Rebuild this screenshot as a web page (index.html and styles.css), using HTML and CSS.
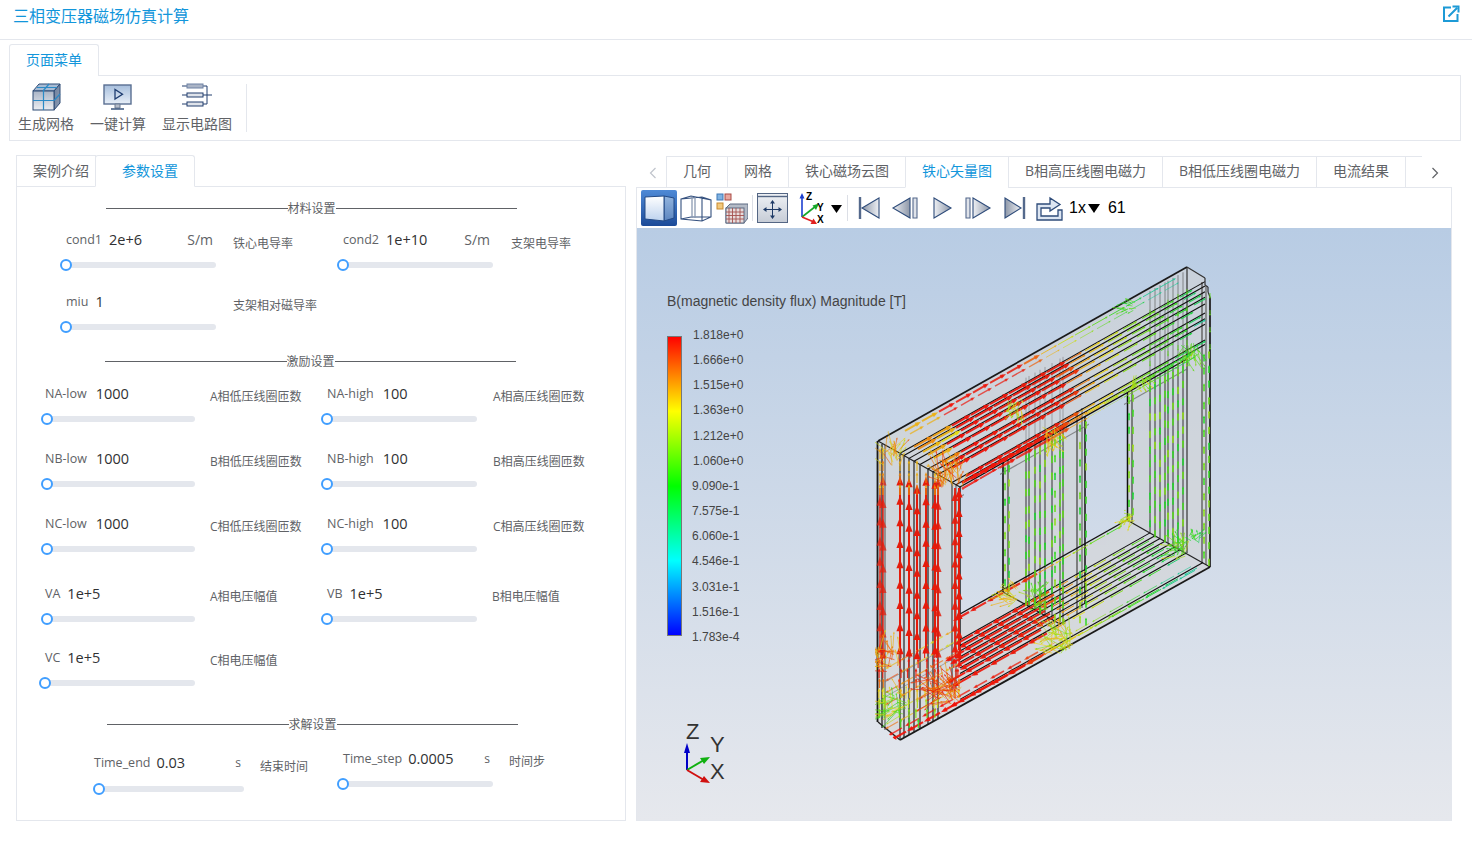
FILE: index.html
```html
<!DOCTYPE html>
<html lang="zh-CN">
<head>
    <meta charset="UTF-8">
    <meta name="viewport" content="width=device-width, initial-scale=1.0">
    <title>三相变压器磁场仿真计算</title>
    <link rel="stylesheet" href="styles.css">
</head>
<body>

<header class="header">
    <span class="title">三相变压器磁场仿真计算</span>
    <svg class="open-link" width="18" height="18" viewBox="0 0 18 18">
        <path d="M9 2.5H2V16H15.5V9" fill="none" stroke="#1d9ad6" stroke-width="2"/>
        <path d="M6.5 11.5L15 3M10.5 1.5H16.5V7.5" fill="none" stroke="#1d9ad6" stroke-width="2"/>
    </svg>
</header>

<section class="menu">
    <div class="menu-tab">页面菜单</div>
    <div class="ribbon">
        <div class="ribbon-btn">
            <svg width="30" height="30" viewBox="0 0 30 30">
                <defs>
                    <linearGradient id="gFace" x1="0" y1="0" x2="0" y2="1"><stop offset="0" stop-color="#a9b4c6"/><stop offset="1" stop-color="#eceef2"/></linearGradient>
                    <linearGradient id="gSide" x1="0" y1="0" x2="1" y2="1"><stop offset="0" stop-color="#6d7f9c"/><stop offset="1" stop-color="#8d9cb4"/></linearGradient>
                    <linearGradient id="gScreen" x1="0" y1="0" x2="0" y2="1"><stop offset="0" stop-color="#a6bedc"/><stop offset="1" stop-color="#e8eff8"/></linearGradient>
                    <linearGradient id="gBtnL" x1="0" y1="0" x2="1" y2="0"><stop offset="0" stop-color="#8d97a8"/><stop offset="1" stop-color="#eef0f4"/></linearGradient>
                    <linearGradient id="gBtnR" x1="0" y1="0" x2="1" y2="0"><stop offset="0" stop-color="#eef0f4"/><stop offset="1" stop-color="#8d97a8"/></linearGradient>
                    <linearGradient id="gActive" x1="0" y1="0" x2="0" y2="1"><stop offset="0" stop-color="#4f8ad6"/><stop offset="1" stop-color="#1b4a98"/></linearGradient>
                    <linearGradient id="gCubeF" x1="0" y1="0" x2="0" y2="1"><stop offset="0" stop-color="#ffffff"/><stop offset="1" stop-color="#bcd2ee"/></linearGradient>
                    <linearGradient id="gCubeS" x1="0" y1="0" x2="0" y2="1"><stop offset="0" stop-color="#92b4de"/><stop offset="1" stop-color="#5c86c0"/></linearGradient>
                    <linearGradient id="gFit" x1="0" y1="0" x2="0" y2="1"><stop offset="0" stop-color="#eef1f5"/><stop offset="1" stop-color="#c6ccd6"/></linearGradient>
                </defs>
                <path d="M2 10L8 3H29L23 10Z" fill="#a8bcd4" stroke="#2c4a75"/>
                <path d="M23 10L29 3V22L23 29Z" fill="url(#gSide)" stroke="#2c4a75"/>
                <rect x="2" y="10" width="21" height="19" fill="url(#gFace)" stroke="#2c4a75"/>
                <path d="M2 19.5H23M12.5 10V29M12 10L18 3M6 6.5H26M23 19.5L29 13" fill="none" stroke="#2b8ac6" stroke-width="1.2"/>
            </svg>
            <span>生成网格</span>
        </div>
        <div class="ribbon-btn">
            <svg width="30" height="30" viewBox="0 0 30 30">
                <rect x="1" y="4" width="27" height="19" fill="url(#gScreen)" stroke="#5a6f92" stroke-width="1.4"/>
                <path d="M12 8.5V18L19.5 13.2Z" fill="none" stroke="#1f3d70" stroke-width="1.3"/>
                <path d="M12 23H17V27H12Z" fill="#b5bcc8" stroke="#6a7a92"/>
                <path d="M8 28H21" stroke="#2c4a75" stroke-width="1.4"/>
            </svg>
            <span>一键计算</span>
        </div>
        <div class="ribbon-btn">
            <svg width="30" height="30" viewBox="0 0 30 30">
                <path d="M0 5H5M21 5H25V23H21M0 14H5M21 14H30M0 23H5" fill="none" stroke="#233f6e" stroke-width="1"/>
                <rect x="5" y="3" width="16" height="4" fill="#aab4c6" stroke="#6e82a4"/>
                <rect x="5" y="12" width="16" height="4" fill="#dfe3ea" stroke="#233f6e"/>
                <rect x="5" y="21" width="16" height="4" fill="#dfe3ea" stroke="#233f6e"/>
            </svg>
            <span>显示电路图</span>
        </div>
        <div class="ribbon-sep"></div>
    </div>
</section>

<main class="main">
    <section class="left">
        <div class="tabs">
            <div class="tab">案例介绍</div>
            <div class="tab active">参数设置</div>
        </div>
        <div class="form">
            <div class="divider d1"><i></i><span>材料设置</span><i></i></div>

            <div class="row r1 h62">
                <div class="field w167">
                    <div class="head"><label>cond1</label><b>2e+6</b><em>S/m</em></div>
                    <div class="slider"><s></s></div>
                </div>
                <div class="desc w110">铁心电导率</div>
                <div class="field w168">
                    <div class="head"><label>cond2</label><b>1e+10</b><em>S/m</em></div>
                    <div class="slider"><s></s></div>
                </div>
                <div class="desc">支架电导率</div>
            </div>
            <div class="row r1 h62">
                <div class="field w167">
                    <div class="head"><label>miu</label><b>1</b></div>
                    <div class="slider"><s></s></div>
                </div>
                <div class="desc">支架相对磁导率</div>
            </div>

            <div class="divider d2"><i></i><span>激励设置</span><i></i></div>

            <div class="row r2 h65">
                <div class="field w165">
                    <div class="head"><label>NA-low</label><b>1000</b></div>
                    <div class="slider short"><s></s></div>
                </div>
                <div class="desc w117">A相低压线圈匝数</div>
                <div class="field w166">
                    <div class="head"><label>NA-high</label><b>100</b></div>
                    <div class="slider"><s></s></div>
                </div>
                <div class="desc">A相高压线圈匝数</div>
            </div>
            <div class="row r2 h65">
                <div class="field w165">
                    <div class="head"><label>NB-low</label><b>1000</b></div>
                    <div class="slider short"><s></s></div>
                </div>
                <div class="desc w117">B相低压线圈匝数</div>
                <div class="field w166">
                    <div class="head"><label>NB-high</label><b>100</b></div>
                    <div class="slider"><s></s></div>
                </div>
                <div class="desc">B相高压线圈匝数</div>
            </div>
            <div class="row r2 h70">
                <div class="field w165">
                    <div class="head"><label>NC-low</label><b>1000</b></div>
                    <div class="slider short"><s></s></div>
                </div>
                <div class="desc w117">C相低压线圈匝数</div>
                <div class="field w166">
                    <div class="head"><label>NC-high</label><b>100</b></div>
                    <div class="slider"><s></s></div>
                </div>
                <div class="desc">C相高压线圈匝数</div>
            </div>
            <div class="row r2 h64">
                <div class="field w165">
                    <div class="head"><label>VA</label><b>1e+5</b></div>
                    <div class="slider short"><s></s></div>
                </div>
                <div class="desc w117">A相电压幅值</div>
                <div class="field w165">
                    <div class="head"><label>VB</label><b>1e+5</b></div>
                    <div class="slider"><s></s></div>
                </div>
                <div class="desc">B相电压幅值</div>
            </div>
            <div class="row r2 h69">
                <div class="field w165">
                    <div class="head"><label>VC</label><b>1e+5</b></div>
                    <div class="slider vc"><s></s></div>
                </div>
                <div class="desc">C相电压幅值</div>
            </div>

            <div class="divider d3"><i></i><span>求解设置</span><i></i></div>

            <div class="row r3">
                <div class="field w166 low">
                    <div class="head"><label>Time_end</label><b>0.03</b><em class="small">s</em></div>
                    <div class="slider end"><s></s></div>
                </div>
                <div class="desc low w83">结束时间</div>
                <div class="field w166">
                    <div class="head"><label>Time_step</label><b>0.0005</b><em class="small">s</em></div>
                    <div class="slider"><s></s></div>
                </div>
                <div class="desc">时间步</div>
            </div>
        </div>
    </section>

    <section class="right">
        <div class="view-tabs">
            <div class="nav"><svg width="8" height="12" viewBox="0 0 8 12"><path d="M6.5 1L1.5 6L6.5 11" fill="none" stroke="#c0c4cc" stroke-width="1.2"/></svg></div>
            <div class="view-list">
                <div class="view-tab">几何</div>
                <div class="view-tab">网格</div>
                <div class="view-tab">铁心磁场云图</div>
                <div class="view-tab active">铁心矢量图</div>
                <div class="view-tab">B相高压线圈电磁力</div>
                <div class="view-tab">B相低压线圈电磁力</div>
                <div class="view-tab">电流结果</div>
            </div>
            <div class="nav next"><svg width="8" height="12" viewBox="0 0 8 12"><path d="M1.5 1L6.5 6L1.5 11" fill="none" stroke="#606266" stroke-width="1.2"/></svg></div>
        </div>
        <div class="viewer">
            <div class="toolbar">
                <svg class="tb-active" width="36" height="36" viewBox="0 0 36 36">
                    <rect width="36" height="36" rx="2" fill="url(#gActive)"/>
                    <path d="M23 6L33 8V28L23 31Z" fill="url(#gCubeS)" stroke="#234a86"/>
                    <path d="M4 7L23 6V31L4 29Z" fill="url(#gCubeF)" stroke="#234a86"/>
                </svg>
                <svg class="ml3" width="32" height="36" viewBox="0 0 32 36">
                    <path d="M1 9L22 7L31 10V27L22 31L1 29ZM22 7V31M1 9L11 6L31 10M1 29L11 27H31" fill="none" stroke="#34507e" stroke-width="1.1"/>
                    <path d="M12 7V28M15 7V28" stroke="#8b9ab2" stroke-width="1.3"/>
                </svg>
                <svg class="ml4" width="32" height="36" viewBox="0 0 32 36">
                    <rect x="1" y="4" width="6" height="6" fill="#7fb2e2" stroke="#3f78b6"/>
                    <rect x="9" y="4" width="6" height="6" fill="#e8a8a0" stroke="#a84a44"/>
                    <rect x="1" y="13" width="6" height="6" fill="#f2c87c" stroke="#c88a30"/>
                    <path d="M10 18L14 14H32V28L28 33H10Z" fill="#b4bbc7" stroke="#5c6a82"/>
                    <rect x="10" y="18" width="18" height="15" fill="#e7dcdc" stroke="#5c6a82"/>
                    <path d="M13 18V33M16.5 18V33M20 18V33M24 18V33M10 22H28M10 25.5H28M10 29H28" stroke="#a4504e" stroke-width=".9"/>
                </svg>
                <div class="tb-sep"></div>
                <svg class="ml4" width="31" height="30" viewBox="0 0 31 30">
                    <rect x=".5" y=".5" width="30" height="29" fill="url(#gFit)" stroke="#546684"/>
                    <path d="M1 3.5H30" stroke="#546684" stroke-width="1.4"/>
                    <path d="M15.5 9V24M8 16.5H23" stroke="#1e3a66" stroke-width="1"/>
                    <path d="M15.5 7L13 10.5H18ZM15.5 26L13 22.5H18ZM6 16.5L9.5 14V19ZM25 16.5L21.5 14V19Z" fill="#1e3a66"/>
                </svg>
                <svg class="ml11" width="44" height="36" viewBox="0 0 44 36">
                    <path d="M3 27V7" stroke="#1c3fd0" stroke-width="1.6"/>
                    <path d="M3 3L.5 8.5H5.5Z" fill="#1c3fd0"/>
                    <path d="M3 27L17 16" stroke="#16a828" stroke-width="1.6"/>
                    <path d="M20 13.5L13.5 15.5L17 20Z" fill="#16a828"/>
                    <path d="M3 27L15 32" stroke="#e02020" stroke-width="1.6"/>
                    <path d="M18 34L11.5 34L14.5 28.5Z" fill="#e02020"/>
                    <text x="7" y="10" class="axis-mini">Z</text>
                    <text x="18" y="21" class="axis-mini">Y</text>
                    <text x="18" y="33" class="axis-mini">X</text>
                    <path d="M32 15H43L37.5 23Z" fill="#000"/>
                </svg>
                <div class="tb-sep sep2"></div>
                <svg class="ml10" width="22" height="24" viewBox="0 0 22 24">
                    <path d="M2 1V23" stroke="#54698c" stroke-width="2.4"/>
                    <path d="M21 2V22L4 12Z" fill="url(#gBtnL)" stroke="#2f4c7a" stroke-width="1.1"/>
                </svg>
                <svg class="ml11" width="28" height="24" viewBox="0 0 28 24">
                    <path d="M19 2V22L2 12Z" fill="url(#gBtnR)" stroke="#2f4c7a" stroke-width="1.1"/>
                    <path d="M22 2H26V22H22Z" fill="#dfe3ea" stroke="#54698c" stroke-width="1.1"/>
                </svg>
                <svg class="ml13" width="21" height="24" viewBox="0 0 21 24">
                    <path d="M2 2V22L19 12Z" fill="url(#gBtnR)" stroke="#2f4c7a" stroke-width="1.1"/>
                </svg>
                <svg class="ml12" width="27" height="24" viewBox="0 0 27 24">
                    <path d="M1 2H5V22H1Z" fill="#dfe3ea" stroke="#54698c" stroke-width="1.1"/>
                    <path d="M8 2V22L25 12Z" fill="url(#gBtnR)" stroke="#2f4c7a" stroke-width="1.1"/>
                </svg>
                <svg class="ml11" width="24" height="24" viewBox="0 0 24 24">
                    <path d="M2 2V22L18 12Z" fill="url(#gBtnL)" stroke="#2f4c7a" stroke-width="1.1"/>
                    <path d="M21 1V23" stroke="#54698c" stroke-width="2.4"/>
                </svg>
                <svg class="ml8" width="28" height="26" viewBox="0 0 28 26">
                    <path d="M2 9H15V3L25 9.5L15 16V13H6V21H23V15H27V25H2Z" fill="#dde6f2" stroke="#2f4c7a" stroke-width="1.3"/>
                </svg>
                <span class="speed">1x</span>
                <svg class="ml2" width="12" height="9" viewBox="0 0 12 9"><path d="M0 0H12L6 9Z" fill="#000"/></svg>
                <span class="frame">61</span>
            </div>
            <div class="canvas">
                <svg class="scene" width="814" height="592" viewBox="637 228 814 592">
                    <defs>
                        <linearGradient id="gLegend" x1="0" y1="0" x2="0" y2="1">
                            <stop offset="0" stop-color="#ff0000"/>
                            <stop offset=".25" stop-color="#ffff00"/>
                            <stop offset=".5" stop-color="#00ff00"/>
                            <stop offset=".75" stop-color="#00ffff"/>
                            <stop offset="1" stop-color="#0000ff"/>
                        </linearGradient>
                        <clipPath id="coreClip">
                            <path clip-rule="evenodd" d="M875 439L1187 264L1208 276L1213 295V569L900 743L875 724Z M964 489L1000 468V590L964 609Z M1089 417L1124 397V517L1089 537Z"/>
                        </clipPath>
                    </defs>
                    <text x="667" y="306" class="legend-title">B(magnetic density flux) Magnitude [T]</text>
                    <rect x="667.5" y="336.5" width="14" height="299" fill="url(#gLegend)" stroke="#777"/>
                    <g class="legend-ticks">
                        <text x="693" y="339">1.818e+0</text>
                        <text x="693" y="364">1.666e+0</text>
                        <text x="693" y="389">1.515e+0</text>
                        <text x="693" y="414">1.363e+0</text>
                        <text x="693" y="440">1.212e+0</text>
                        <text x="693" y="465">1.060e+0</text>
                        <text x="692" y="490">9.090e-1</text>
                        <text x="692" y="515">7.575e-1</text>
                        <text x="692" y="540">6.060e-1</text>
                        <text x="692" y="565">4.546e-1</text>
                        <text x="692" y="591">3.031e-1</text>
                        <text x="692" y="616">1.516e-1</text>
                        <text x="692" y="641">1.783e-4</text>
                    </g>
                    <g id="model" clip-path="url(#coreClip)"></g>
                    <path d="M687 770V748" stroke="#0000c8" stroke-width="2"/>
                    <path d="M687 743L684 753H690Z" fill="#0000c8"/>
                    <path d="M687 770L704 760" stroke="#10b010" stroke-width="2"/>
                    <path d="M710 757L700 758L704 764Z" fill="#10b010"/>
                    <path d="M687 770L704 780" stroke="#d01010" stroke-width="2"/>
                    <path d="M710 783L700 782L704 776Z" fill="#d01010"/>
                    <text x="686" y="739" class="axis-big">Z</text>
                    <text x="710" y="752" class="axis-big">Y</text>
                    <text x="710" y="779" class="axis-big">X</text>
                </svg>
            </div>
        </div>
    </section>
</main>

<script src="model.js"></script>
</body>
</html>
```

FILE: styles.css
```css
* {
    box-sizing: border-box;
}

body {
    margin: 0;
    height: 841px;
    overflow: hidden;
    background-color: #ffffff;
    font-family: "Open Sans", "Noto Sans CJK SC", sans-serif;
    font-size: 14px;
    color: #606266;
}

.header {
    height: 40px;
    padding: 5px 12px 0 13px;
    display: flex;
    justify-content: space-between;
    align-items: flex-start;
    border-bottom: 1px solid #e4e7ed;
}

.title {
    font-size: 16px;
    line-height: 22px;
    color: #1296db;
}

.menu {
    margin: 4px 11px 0 9px;
}

.menu-tab {
    width: 90px;
    height: 32px;
    line-height: 30px;
    text-align: center;
    color: #1296db;
    background-color: #ffffff;
    border: 1px solid #e4e7ed;
    border-bottom: none;
    border-radius: 3px 3px 0 0;
    position: relative;
    z-index: 1;
}

.ribbon {
    height: 66px;
    margin-top: -1px;
    padding-top: 5px;
    display: flex;
    border: 1px solid #e4e7ed;
}

.ribbon-btn {
    padding: 0 8px;
    display: flex;
    flex-direction: column;
    align-items: center;
    height: 56px;
}

.ribbon-btn span {
    line-height: 20px;
    margin-top: 3px;
    white-space: nowrap;
}

.ribbon-sep {
    width: 1px;
    height: 48px;
    margin: 3px 0 0 6px;
    background-color: #e4e7ed;
}

.main {
    margin: 14px 20px 0 16px;
    display: flex;
    gap: 10px;
}

.left {
    width: 610px;
}

.tabs {
    display: flex;
    height: 32px;
    position: relative;
    z-index: 1;
}

.tab {
    width: 80px;
    line-height: 30px;
    padding-left: 16px;
    border: 1px solid #e4e7ed;
    background-color: #ffffff;
}

.tab.active {
    width: 100px;
    padding-left: 26px;
    margin-left: -1px;
    color: #1296db;
    border-bottom-color: #ffffff;
    border-radius: 3px 3px 0 0;
}

.form {
    height: 635px;
    margin-top: -1px;
    padding-top: 14px;
    border: 1px solid #e4e7ed;
}

.divider {
    width: 411px;
    height: 14px;
    display: flex;
    align-items: center;
    font-size: 12px;
    line-height: 14px;
}

.divider span {
    padding-top: 2px;
}

.divider i {
    flex: 1;
    height: 1px;
    background-color: #606266;
}

.d1 { margin: 0 0 15px 89px; }
.d2 { margin: 0 0 16px 88px; }
.d3 { margin: 0 0 18px 90px; }

.row {
    display: flex;
    align-items: flex-start;
}

.r1 { padding-left: 49px; }
.r2 { padding-left: 28px; }
.r3 { padding-left: 77px; }

.h62 { height: 62px; }
.h64 { height: 64px; }
.h65 { height: 65px; }
.h69 { height: 69px; }
.h70 { height: 70px; }

.w83 { width: 83px; }
.w110 { width: 110px; }
.w117 { width: 117px; }
.w165 { width: 165px; }
.w166 { width: 166px; }
.w167 { width: 167px; }
.w168 { width: 168px; }

.head {
    width: 150px;
    height: 20px;
    margin-top: -1px;
    padding-right: 3px;
    display: flex;
    align-items: center;
    gap: 8px;
}

.r1 .head { gap: 7px; }
.r2 .head { gap: 9px; }
.r2.h64 .head,
.r2.h69 .head { gap: 7px; }
.r3 .head { gap: 6px; }

.head label {
    font-size: 12.5px;
    white-space: nowrap;
}

.head b {
    font-weight: 400;
    font-size: 14.5px;
    color: #303133;
}

.head em {
    margin-left: auto;
    font-style: normal;
}

.head em.small {
    font-size: 12px;
}

.slider {
    width: 150px;
    height: 6px;
    margin-top: 13px;
    background-color: #e4e7ed;
    border-radius: 3px;
    position: relative;
}

.slider s {
    position: absolute;
    left: -6px;
    top: -3px;
    width: 12px;
    height: 12px;
    background-color: #ffffff;
    border: 2px solid #409eff;
    border-radius: 50%;
}

.slider.short {
    width: 148px;
    margin-left: 2px;
}

.slider.end {
    width: 145px;
    margin-left: 5px;
    margin-top: 14px;
}

.desc {
    margin-top: 3px;
    font-size: 12px;
    line-height: 20px;
    white-space: nowrap;
}

.r1 .desc {
    margin-top: 4px;
}

.field.low {
    margin-top: 4px;
}

.desc.low {
    margin-top: 8px;
}

.right {
    width: 816px;
}

.view-tabs {
    height: 32px;
    display: flex;
    position: relative;
    z-index: 1;
}

.nav {
    width: 30px;
    padding-top: 5px;
    padding-left: 13px;
    line-height: 26px;
    margin-top: 1px;
}

.nav.next {
    padding-left: 9px;
}

.view-list {
    width: 756px;
    height: 32px;
    margin-top: 1px;
    display: flex;
    border-top: 1px solid #e4e7ed;
}

.view-tab {
    padding: 0 16px;
    height: 31px;
    line-height: 28px;
    white-space: nowrap;
    border-left: 1px solid #e4e7ed;
    border-bottom: 1px solid #e4e7ed;
    background-color: #ffffff;
}

.view-tab:last-child {
    border-right: 1px solid #e4e7ed;
}

.view-tab.active {
    color: #1296db;
    border-bottom-color: #ffffff;
}

.viewer {
    height: 634px;
    border: 1px solid #e4e7ed;
}

.toolbar {
    height: 40px;
    padding-left: 4px;
    display: flex;
    align-items: center;
}

.tb-sep {
    width: 1px;
    height: 26px;
    margin-left: 4px;
    background-color: #dcdfe6;
}

.sep2 {
    margin-left: 4px;
}

.ml2 { margin-left: 2px; }
.ml3 { margin-left: 3px; }
.ml4 { margin-left: 4px; }
.ml8 { margin-left: 8px; }
.ml10 { margin-left: 10px; }
.ml11 { margin-left: 11px; }
.ml12 { margin-left: 12px; }
.ml13 { margin-left: 13px; }

.speed,
.frame {
    font-family: "Liberation Sans", sans-serif;
    font-size: 16px;
    color: #000000;
}

.speed {
    margin-left: 6px;
}

.frame {
    margin-left: 8px;
}

.axis-mini {
    font-family: "Liberation Sans", sans-serif;
    font-size: 10px;
    font-weight: 700;
    fill: #000000;
}

.canvas {
    height: 592px;
    background: linear-gradient(#b8cce4, #e6e8ed);
}

.scene {
    display: block;
}

.legend-title {
    font-family: "Liberation Sans", sans-serif;
    font-size: 14px;
    fill: #444444;
}

.legend-ticks text {
    font-family: "Liberation Sans", sans-serif;
    font-size: 12px;
    fill: #444444;
}

.axis-big {
    font-family: "Liberation Sans", sans-serif;
    font-size: 22px;
    fill: #333333;
}
```

FILE: model.js
```js
// draws the transformer core: faces, edges and flux arrows
const model = document.getElementById('model');
const NS = 'http://www.w3.org/2000/svg';

let seed = 17;
function rnd() {
    seed = (seed * 16807) % 2147483647;
    return seed / 2147483647;
}

function add(tag, attrs) {
    const el = document.createElementNS(NS, tag);
    for (const k in attrs) el.setAttribute(k, attrs[k]);
    model.appendChild(el);
    return el;
}

function line(x1, y1, x2, y2, color, w, op) {
    add('line', { x1, y1, x2, y2, stroke: color, 'stroke-width': w || 1, opacity: op || 1 });
}

const stops = [
    [0, 240, 20, 10], [0.36, 232, 28, 10], [0.45, 240, 130, 10], [0.55, 232, 220, 20],
    [0.72, 110, 220, 20], [0.9, 30, 215, 40], [1, 30, 200, 150]
];

function heat(t) {
    t = Math.max(0, Math.min(1, t));
    for (let i = 1; i < stops.length; i++) {
        if (t <= stops[i][0]) {
            const a = stops[i - 1], b = stops[i];
            const f = (t - a[0]) / (b[0] - a[0]);
            return 'rgb(' + [1, 2, 3].map(n => Math.round(a[n] + (b[n] - a[n]) * f)).join(',') + ')';
        }
    }
    return 'rgb(30,200,150)';
}

function arrow(x, y, dx, dy, color, w, head, op) {
    const len = Math.hypot(dx, dy) || 1;
    const ux = dx / len, uy = dy / len;
    const tx = x + dx, ty = y + dy;
    line(x, y, tx - ux * head, ty - uy * head, color, w, op);
    const bx = tx - ux * head * 2, by = ty - uy * head * 2;
    const nx = -uy * head * 0.75, ny = ux * head * 0.75;
    add('path', {
        d: `M${tx} ${ty}L${bx + nx} ${by + ny}L${bx - nx} ${by - ny}Z`,
        fill: color, opacity: op || 1
    });
}

function fan(cx, cy, r, n, a0, a1, t0, t1) {
    for (let i = 0; i < n; i++) {
        const a = (a0 + (a1 - a0) * rnd()) * Math.PI / 180;
        const d = r * (0.4 + 0.6 * rnd());
        const sx = cx + (rnd() - 0.5) * r;
        const sy = cy + (rnd() - 0.5) * r;
        arrow(sx, sy, Math.cos(a) * d, Math.sin(a) * d, heat(t0 + (t1 - t0) * rnd()), 0.8, 1.1, 0.8);
    }
}

const topEdge = x => 441 - (x - 878) * 0.563;
const railLow = x => 487 - (x - 960) * 0.568;
const dTop = x => 441 + (x - 878) * 0.56;
const botEdge = x => x < 900 ? 722 + (x - 878) * 0.82 : 740 - (x - 900) * 0.558;

// translucent body with the two windows cut out
add('path', {
    d: 'M878 441L1187 267L1205 278V285L1208 287V292L1210 297V567L900 740L878 722Z' +
       'M960 487L1003 463V592L960 614Z M1085 416L1127 393V520L1085 543Z',
    fill: 'rgba(212,212,212,0.58)', 'fill-rule': 'evenodd'
});

// vertical edges, left leg
const leftBlack = [900, 904, 909, 914, 920, 928, 933, 938];
line(877.5, 441, 877.5, 722, '#1a1a1a', 1.8);
line(882, 444, 882, 728, '#555', 1.8);
line(885, 445, 885, 730, '#777', 1.4);
leftBlack.forEach(x => line(x, dTop(x), x, botEdge(x), '#111', 1.1));
line(952, 483, 952, 690, '#666', 1.6);
line(956, 485, 956, 688, '#777', 1.4);
line(960, 487, 960, 660, '#111', 1.4);

// middle leg
const midBlack = [1026, 1029, 1035, 1040, 1045, 1052, 1060, 1063];
line(1003, 463, 1003, 592, '#111', 1.6);
line(1008, 460, 1008, 594, '#666', 1.6);
midBlack.forEach(x => {
    line(x, topEdge(x) + 20, x, railLow(x), '#666', 0.8, 0.6);
    line(x, railLow(x), x, 592 + (Math.min(x, 1060) - 1003) * 0.56, '#222', 0.9);
});
line(1077, 411, 1077, 614, '#666', 1.6);
line(1082, 408, 1082, 608, '#777', 1.4);
line(1085, 416, 1085, 603, '#111', 1.5);

// right leg
const rightBlack = [1150, 1155, 1160, 1165, 1168, 1173, 1178, 1183];
line(1127.5, 393, 1127.5, 520, '#111', 1.5);
line(1132, 391, 1132, 523, '#666', 1.6);
rightBlack.forEach(x => {
    line(x, topEdge(x) + 3, x, railLow(x), '#555', 0.9, 0.7);
    line(x, railLow(x), x, 520 + (x - 1127) * 0.56, '#222', 0.9);
});
line(1187, 267, 1187, 553, '#333', 1.2);
line(1202, 282, 1202, 563, '#666', 1.5);
line(1206, 286, 1206, 565, '#666', 1.3);
line(1210, 297, 1210, 567, '#222', 1.8);

// rails
leftBlack.concat([952, 956]).forEach(x => {
    const y = dTop(x);
    const end = 1205;
    line(x, y, end, y - (end - x) * 0.563, '#111', 1.1);
});
line(960, 487, 1187, 359, '#111', 1.4);
line(958, 498, 1187, 369, '#666', 1.2, 0.7);
line(878, 441, 1187, 267, '#1a1a1a', 1.8);
line(878, 441, 960, 487, '#222', 1.2);
line(1187, 267, 1205, 278, '#333', 1.2);
line(1205, 278, 1205, 285, '#333', 1.2);
line(1205, 285, 1208, 287, '#333', 1.2);
line(1208, 287, 1208, 292, '#333', 1.2);
line(1208, 292, 1210, 297, '#333', 1.2);

line(960, 614, 1127, 520, '#111', 1.4);
line(1127, 520, 1210, 567, '#222', 1.2);
line(1003, 592, 1060, 624, '#222', 1.2);
line(900, 740, 1210, 567, '#1a1a1a', 1.8);
line(878, 722, 900, 740, '#222', 1.4);
const bottomEnds = [1150, 1155, 1160, 1165, 1170, 1175, 1180, 1186, 1203];
bottomEnds.forEach(xe => {
    const ye = 520 + (xe - 1127) * 0.56;
    line(xe, ye, 960, ye + (xe - 960) * 0.563, '#111', 1.1);
});
line(960, 640, 885, 682, '#666', 0.8, 0.6);
line(960, 655, 885, 697, '#666', 0.8, 0.6);

// flux in the top rail
const railStarts = [900, 904, 909, 914, 920, 928, 933, 938, 952, 957];
railStarts.forEach(x0 => {
    const y0 = dTop(x0) + 1.5;
    for (let x = x0 + 14; x < 1198; x += 19) {
        const t = (x - 965) / 235;
        const hot = t < 0.42;
        const len = hot ? 19 : 19 - 7 * Math.min(1, t);
        const y = y0 - (x - x0) * 0.563;
        const c = x < 945 ? heat(0.46 + rnd() * 0.1) : heat(t + (rnd() - 0.5) * 0.06);
        arrow(x, y, len, -len * 0.563, c, hot ? 2 : 1.1, hot ? 3.2 : 1.5, 0.92);
    }
});
for (let x = 962; x < 1190; x += 18) {
    const t = (x - 960) / 230;
    const w = t < 0.42 ? 2.6 : 1.1;
    const y = 484 - (x - 960) * 0.566;
    arrow(x, y, 18, -10.1, heat(t), w, t < 0.42 ? 3.6 : 1.5, 0.95);
    arrow(x, y + 6, 18, -10.1, heat(t), w * 0.9, t < 0.42 ? 3 : 1.5, 0.8);
}
for (let x = 905; x < 1170; x += 17) {
    const t = (x - 940) / 200;
    const c = x < 935 ? heat(0.5) : heat(t);
    arrow(x, topEdge(x) + 5, 16, -9, c, t < 0.45 ? 2 : 1, t < 0.45 ? 3 : 1.4, 0.85);
    arrow(x + 5, topEdge(x + 5) + 11, 14, -7.9, c, t < 0.45 ? 1.4 : 0.8, t < 0.45 ? 2.2 : 1.2, 0.7);
}

// flux in the bottom rail, running back towards the left leg
bottomEnds.forEach(xe => {
    const ye = 522 + (xe - 1127) * 0.56;
    for (let x = xe - 6; x > 962; x -= 19) {
        const t = (x - 965) / 225;
        const y = ye + (xe - x) * 0.563;
        const hot = t < 0.42;
        const len = hot ? 19 : 13;
        arrow(x, y, -len, len * 0.563, heat(t + (rnd() - 0.5) * 0.05), hot ? 2 : 1, hot ? 3.4 : 1.4, 0.92);
    }
});
for (let x = 1195; x > 905; x -= 17) {
    const t = (x - 955) / 225;
    arrow(x, botEdge(x) - 5, -16, 9, heat(t), t < 0.42 ? 2.2 : 1, t < 0.42 ? 3.2 : 1.4, 0.92);
    arrow(x - 4, botEdge(x - 4) - 11, -14, 7.9, heat(t), t < 0.42 ? 1.6 : 0.8, t < 0.42 ? 2.4 : 1.2, 0.75);
}
for (let x = 1122; x > 962; x -= 17) {
    const t = (x - 965) / 190;
    arrow(x, 523 + (1127 - x) * 0.563, -16, 9, heat(t), t < 0.42 ? 2.2 : 1, t < 0.42 ? 3 : 1.4, 0.88);
}

// the bottom rail carries on faintly across the left leg
[628, 640, 652, 664, 676, 688].forEach(y0 => {
    for (let x = 958; x > 888; x -= 15) {
        const y = y0 + (958 - x) * 0.563;
        arrow(x, y, -13, 7.3, heat(0.4 + rnd() * 0.18), 1.2, 1.8, 0.65);
    }
});

// flux in the left leg, upwards
[[880, 0.7], [883, 0.7], [900, 1], [909, 1], [917, 1], [926, 1], [935, 1], [938, 0.85], [955, 0.9], [959, 1]].forEach(c => {
    const x = c[0];
    line(x, 488, x, 650, '#e41c0c', 2, c[1]);
    for (let y = 652 + rnd() * 8; y > 484; y -= 19 + rnd() * 4) {
        add('path', { d: `M${x} ${y - 9}L${x - 3.6} ${y}L${x + 3.6} ${y}Z`, fill: '#e41c0c', opacity: c[1] });
    }
    for (let y = 728; y > 650; y -= 10) {
        const t = Math.max(0.05, (y - 650) / 100);
        if (y < botEdge(x) - 2) arrow(x + (rnd() - 0.5) * 3, y, 0, -10, heat(t + rnd() * 0.06), 1.2, 1.8, 0.9);
    }
    if (x < 950) {
        for (let y = 495; y > dTop(x) + 6; y -= 12) arrow(x, y, 0, -11, heat(0.42 + rnd() * 0.1), 1.2, 1.8, 0.85);
    }
});

// short arrows in the two weak legs
midBlack.concat([1005, 1009, 1055, 1080, 1086], rightBlack, [1129, 1133, 1204, 1209]).forEach(x => {
    const right = x > 1100;
    const top = railLow(x) + 5;
    const bot = right ? 520 + (x - 1127) * 0.56 : 592 + (Math.min(x, 1060) - 1003) * 0.56;
    for (let y = top; y < bot - 6; y += 13 + rnd() * 5) {
        const t = 0.66 + rnd() * 0.26;
        arrow(x, y + 8, 0, -8, heat(t), 1.5, 1.3, 1);
    }
});
[1150, 1168, 1178, 1210, 1187].forEach(x => {
    for (let y = topEdge(x) + 22; y < railLow(x); y += 17) arrow(x, y, 0, 6, heat(0.76), 1, 1.1, 0.8);
});

// corner spread
fan(950, 476, 24, 46, 190, 300, 0.38, 0.52);
fan(892, 456, 22, 24, 210, 330, 0.4, 0.62);
fan(1050, 434, 18, 22, 20, 130, 0.46, 0.62);
fan(1015, 405, 14, 20, 50, 130, 0.5, 0.7);
fan(1190, 350, 18, 26, 30, 150, 0.6, 0.85);
fan(1140, 382, 14, 20, 30, 140, 0.54, 0.72);
fan(1130, 305, 14, 12, 150, 220, 0.72, 0.95);
fan(948, 690, 28, 52, 130, 280, 0.3, 0.5);
fan(888, 660, 24, 34, 150, 300, 0.36, 0.55);
fan(895, 705, 24, 36, 120, 280, 0.5, 0.85);
fan(1062, 642, 24, 46, 140, 300, 0.48, 0.72);
fan(1010, 597, 18, 26, 140, 240, 0.48, 0.62);
fan(1040, 600, 18, 22, 150, 330, 0.62, 0.85);
fan(1180, 548, 18, 32, 120, 330, 0.55, 0.95);
fan(1128, 517, 14, 24, 100, 190, 0.54, 0.66);
fan(1195, 540, 12, 14, 200, 340, 0.8, 1);
```
